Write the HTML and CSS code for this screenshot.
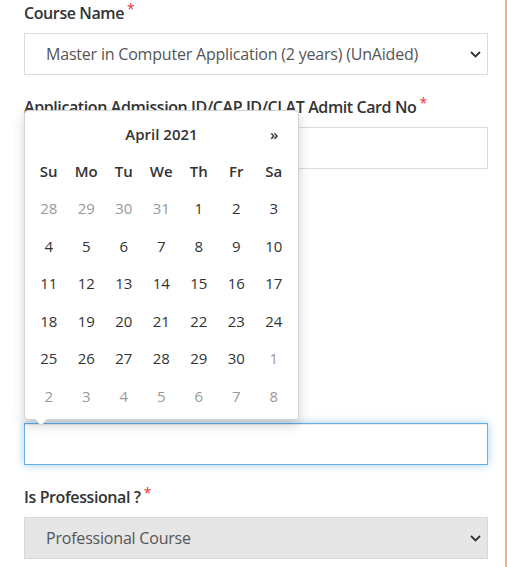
FILE: index.html
```html
<!DOCTYPE html>
<html>
<head>
<meta charset="utf-8">
<link rel="stylesheet" href="styles.css">
</head>
<body>
<div class="page">
  <div class="form">
    <div class="field">
      <label class="label">Course Name<span class="req">*</span></label>
      <div class="select">
        <span>Master in Computer Application (2 years) (UnAided)</span>
        <svg class="chev" width="11" height="7" viewBox="0 0 11 7"><path d="M1 1 L5.5 5.5 L10 1" fill="none" stroke="#333" stroke-width="1.8"/></svg>
      </div>
    </div>
    <div class="field">
      <label class="label">Application Admission ID/CAP ID/CLAT Admit Card No<span class="req">*</span></label>
      <div class="input"></div>
    </div>
    <div class="gap"></div>
    <div class="field">
      <label class="label label-hidden"><span class="stem"></span></label>
      <div class="input focus"></div>
    </div>
    <div class="field">
      <label class="label">Is Professional ?<span class="req">*</span></label>
      <div class="select disabled">
        <span>Professional Course</span>
        <svg class="chev" width="11" height="7" viewBox="0 0 11 7"><path d="M1 1 L5.5 5.5 L10 1" fill="none" stroke="#333" stroke-width="1.8"/></svg>
      </div>
    </div>
  </div>

  <div class="datepicker">
    <div class="dp-head">
      <span class="dp-cell"></span>
      <span class="dp-title">April 2021</span>
      <span class="dp-cell dp-next">»</span>
    </div>
    <div class="dp-grid">
      <span class="dow">Su</span><span class="dow">Mo</span><span class="dow">Tu</span><span class="dow">We</span><span class="dow">Th</span><span class="dow">Fr</span><span class="dow">Sa</span>
      <span class="old">28</span><span class="old">29</span><span class="old">30</span><span class="old">31</span><span>1</span><span>2</span><span>3</span>
      <span>4</span><span>5</span><span>6</span><span>7</span><span>8</span><span>9</span><span>10</span>
      <span>11</span><span>12</span><span>13</span><span>14</span><span>15</span><span>16</span><span>17</span>
      <span>18</span><span>19</span><span>20</span><span>21</span><span>22</span><span>23</span><span>24</span>
      <span>25</span><span>26</span><span>27</span><span>28</span><span>29</span><span>30</span><span class="old">1</span>
      <span class="old">2</span><span class="old">3</span><span class="old">4</span><span class="old">5</span><span class="old">6</span><span class="old">7</span><span class="old">8</span>
    </div>
  </div>
</div>
</body>
</html>
```
FILE: styles.css
```css
* { box-sizing: border-box; }
html, body { margin: 0; padding: 0; background: #fff; }
body { font-family: "Open Sans", "Noto Sans", sans-serif; color: #333; }

.page {
  position: relative;
  width: 507px;
  min-height: 567px;
  border-right: 2px solid #f4b183;
  overflow: hidden;
}

.form {
  width: 488px;
  padding: 3px 0 0 24px;
  display: flex;
  flex-direction: column;
  gap: 22px;
}

.field { display: flex; flex-direction: column; gap: 10px; }

.label {
  font-size: 16px;
  line-height: 20px;
  font-weight: 600;
  color: #333;
  letter-spacing: -0.4px;
  white-space: nowrap;
}
.label-hidden { height: 20px; display: flex; align-items: flex-end; }
.stem { width: 2px; height: 5px; background: #555; margin-bottom: 4px; }
.req {
  color: #e8333a;
  font-weight: 400;
  font-size: 14px;
  line-height: 0;
  position: relative;
  top: -5px;
  margin-left: 3px;
}

.select, .input {
  height: 42px;
  border: 1px solid #dcdcdc;
  background: #fff;
}
.select {
  display: flex;
  align-items: center;
  justify-content: space-between;
  padding: 0 6px 0 21px;
  font-size: 16px;
  color: #555;
  letter-spacing: -0.2px;
}
.select.disabled { background: #e6e6e6; border-color: #d8d8d8; }

.input.focus {
  border-color: #66afe9;
  box-shadow: inset 0 1px 1px rgba(0,0,0,.075), 0 0 8px rgba(102,175,233,.6);
}

.gap { height: 202px; margin-top: -22px; }

.datepicker {
  position: absolute;
  left: 24px;
  top: 110px;
  width: 275px;
  height: 310px;
  padding: 4px 5px;
  background: #fff;
  border: 1px solid #d4d4d4;
  border-radius: 4px;
  box-shadow: 0 5px 12px rgba(0,0,0,.18);
  font-size: 15px;
  color: #333;
}
.datepicker::before {
  content: "";
  position: absolute;
  left: 9px;
  bottom: -7px;
  border-left: 7px solid transparent;
  border-right: 7px solid transparent;
  border-top: 7px solid #c8c8c8;
}
.datepicker::after {
  content: "";
  position: absolute;
  left: 10px;
  bottom: -6px;
  border-left: 6px solid transparent;
  border-right: 6px solid transparent;
  border-top: 6px solid #fff;
}

.dp-head {
  display: grid;
  grid-template-columns: 37.5px 1fr 37.5px;
  height: 37px;
  align-items: center;
  text-align: center;
}
.dp-title { font-weight: 600; }
.dp-next { font-weight: 600; }

.dp-grid {
  display: grid;
  grid-template-columns: repeat(7, 37.5px);
  grid-auto-rows: 37.5px;
  align-items: center;
  text-align: center;
}
.dow { font-weight: 600; }
.old { color: #999; }
```
